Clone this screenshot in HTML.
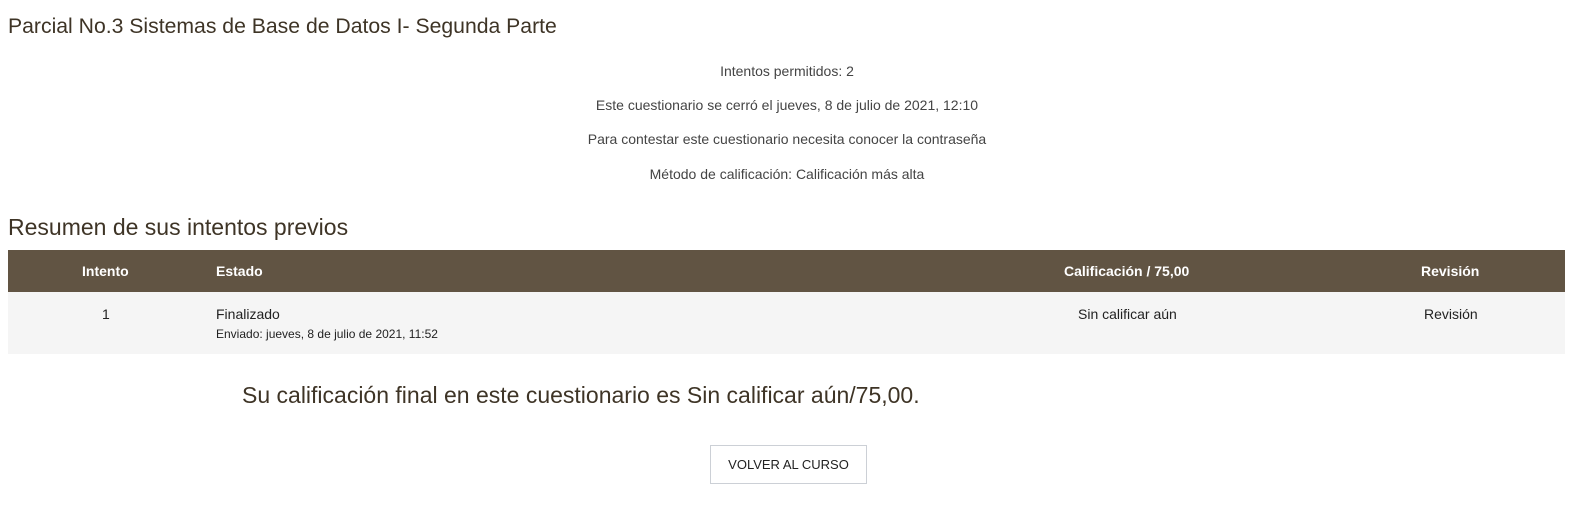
<!DOCTYPE html>
<html><head><meta charset="utf-8"><style>
body{margin:0;background:#fff;font-family:"Liberation Sans",sans-serif;color:#3e3426;width:1594px;height:512px;overflow:hidden;position:relative}
.a{position:absolute;white-space:nowrap}
h1{position:absolute;left:8px;top:15px;margin:0;font-weight:normal;font-size:21.2px;color:#3e3426}
h2{position:absolute;left:8px;top:214px;margin:0;font-weight:normal;font-size:23px;color:#3e3426}
.c{position:absolute;left:0;width:1574px;text-align:center;font-size:14px;color:#444}
.hd{position:absolute;left:8px;top:250px;width:1557px;height:42px;background:#615443;color:#fff;font-weight:bold;font-size:14px}
.row{position:absolute;left:8px;top:292px;width:1557px;height:62px;background:#f5f5f5;font-size:14px;color:#222}
.btn{position:absolute;left:710px;top:445px;width:157px;height:39px;border:1px solid #ccd0d6;box-sizing:border-box;font-size:13px;color:#222;text-align:center;line-height:37px}
</style></head><body>
<h1>Parcial No.3 Sistemas de Base de Datos I- Segunda Parte</h1>
<div class="c" style="top:63px">Intentos permitidos: 2</div>
<div class="c" style="top:97px">Este cuestionario se cerró el jueves, 8 de julio de 2021, 12:10</div>
<div class="c" style="top:131px">Para contestar este cuestionario necesita conocer la contraseña</div>
<div class="c" style="top:166px">Método de calificación: Calificación más alta</div>
<h2>Resumen de sus intentos previos</h2>
<div class="hd">
<span class="a" style="left:74px;top:13px">Intento</span>
<span class="a" style="left:208px;top:13px">Estado</span>
<span class="a" style="left:1056px;top:13px">Calificación / 75,00</span>
<span class="a" style="left:1413px;top:13px">Revisión</span>
</div>
<div class="row">
<span class="a" style="left:94px;top:14px">1</span>
<span class="a" style="left:208px;top:14px">Finalizado</span>
<span class="a" style="left:208px;top:35px;font-size:12px">Enviado: jueves, 8 de julio de 2021, 11:52</span>
<span class="a" style="left:1070px;top:14px">Sin calificar aún</span>
<span class="a" style="left:1416px;top:14px">Revisión</span>
</div>
<div class="a" style="left:242px;top:382px;font-size:23px;color:#3e3426">Su calificación final en este cuestionario es Sin calificar aún/75,00.</div>
<div class="btn">VOLVER AL CURSO</div>
</body></html>
